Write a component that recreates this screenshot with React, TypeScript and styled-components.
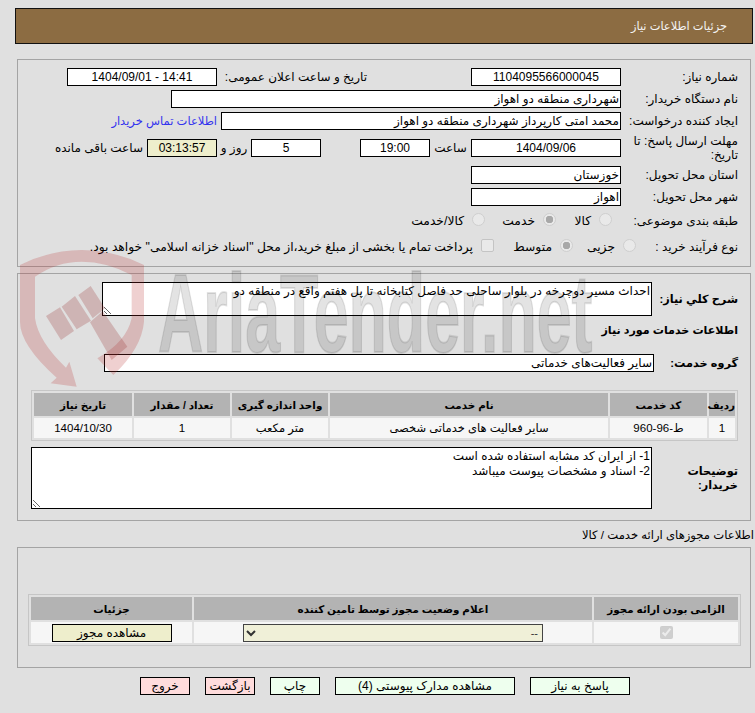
import React from 'react';
import styled, { createGlobalStyle } from 'styled-components';

const GlobalStyle = createGlobalStyle`
  html, body {
    margin: 0;
    padding: 0;
    background: #e0e0e0;
  }
  body {
    direction: rtl;
    color: #000;
    font-family: "Liberation Sans", "DejaVu Sans", sans-serif;
    font-size: 12px;
  }
`;

const Page = styled.div`
  position: relative;
  height: 713px;
  overflow: hidden;
  padding: 8px 4px 0 17px;
  box-sizing: border-box;
`;

const Header = styled.header`
  display: flex;
  align-items: center;
  height: 36px;
  margin: 0 -2px 15px;
  padding-right: 25px;
  box-sizing: border-box;
  background: #8c6c42;
  border: 1px solid #111;
  color: #f4f4f4;
  font-size: 11.4px;
`;

const Panel = styled.section<{ $pad: string; $gap?: number }>`
  display: flex;
  flex-direction: column;
  gap: ${(p) => p.$gap ?? 4}px;
  padding: ${(p) => p.$pad};
  border: 1px solid #a4a4a4;
  box-sizing: border-box;
`;

const Row = styled.div<{ $h?: number; $mt?: number }>`
  display: flex;
  align-items: center;
  height: ${(p) => p.$h ?? 18}px;
  margin-top: ${(p) => p.$mt ?? 0}px;
  flex: none;
`;

const Label = styled.label<{ $w?: number; $gap?: number; $center?: boolean }>`
  flex: none;
  width: ${(p) => p.$w ?? 117}px;
  margin-right: ${(p) => p.$gap ?? 0}px;
  font-size: 12px;
  line-height: 14px;
  text-align: ${(p) => (p.$center ? 'center' : 'start')};
  white-space: ${(p) => (p.$center ? 'nowrap' : 'normal')};
`;

const BoldLabel = styled(Label)`
  font-size: 11.3px;
  font-weight: bold;
  white-space: nowrap;
`;

const Field = styled.div<{ $w: number; $gap?: number; $center?: boolean; $bg?: string }>`
  flex: none;
  width: ${(p) => p.$w}px;
  height: 18px;
  margin-right: ${(p) => p.$gap ?? 0}px;
  padding: 0 1px;
  box-sizing: border-box;
  background: ${(p) => p.$bg ?? '#fff'};
  border: 1px solid #000;
  font-size: 12px;
  line-height: 16px;
  text-align: ${(p) => (p.$center ? 'center' : 'start')};
  white-space: nowrap;
  overflow: hidden;
`;

const ContactLink = styled.a`
  margin-right: 4px;
  color: #3333ee;
  font-size: 11.5px;
  white-space: nowrap;
`;

const Option = styled.span<{ $w?: number }>`
  display: inline-flex;
  align-items: center;
  gap: 8px;
  flex: none;
  width: ${(p) => (p.$w ? `${p.$w}px` : 'auto')};
  font-size: 12.3px;
  white-space: nowrap;
`;

const Radio = styled.input.attrs({ type: 'radio', disabled: true })`
  appearance: none;
  flex: none;
  width: 13px;
  height: 13px;
  margin: 0 0 3px;
  border: 1px solid #cfcfcf;
  border-radius: 50%;
  background: #e9e9e9;

  &:checked {
    background: radial-gradient(circle, #a8a8a8 0 3.5px, #e9e9e9 4px);
  }
`;

const EmptyCheck = styled.input.attrs({ type: 'checkbox', disabled: true })`
  appearance: none;
  flex: none;
  width: 13px;
  height: 13px;
  margin: 0 0 3px;
  border: 1px solid #c4c4c4;
  border-radius: 2px;
  background: #e9e9e9;
`;

const TextBox = styled.textarea<{ $w: number; $h: number }>`
  display: block;
  flex: none;
  width: ${(p) => p.$w}px;
  height: ${(p) => p.$h}px;
  margin: 0;
  padding: 1px;
  box-sizing: border-box;
  border: 1px solid #000;
  border-radius: 0;
  outline: none;
  background: #fff;
  font-family: inherit;
  font-size: 12px;
  line-height: 15px;
  direction: rtl;
`;

const Heading = styled.div`
  font-size: 11.1px;
  font-weight: bold;
`;

const Grid = styled.table<{ $w: number }>`
  flex: none;
  width: ${(p) => p.$w}px;
  table-layout: fixed;
  border: 1px solid #c6c6c6;
  border-spacing: 2px;
  border-collapse: separate;
`;

const Th = styled.th`
  height: 23px;
  padding: 0;
  background: #b3b3b3;
  font-size: 10.4px;
  font-weight: bold;
  text-align: center;
`;

const Td = styled.td<{ $h?: number }>`
  height: ${(p) => p.$h ?? 20}px;
  padding: 0;
  background: #f6f6f6;
  font-size: 11.5px;
  text-align: center;
`;

const SectionTitle = styled.div`
  height: 26px;
  margin-right: -3px;
  font-size: 11.6px;
  line-height: 28px;
`;

const LicenseButton = styled.button`
  display: block;
  width: 120px;
  height: 18px;
  margin: 0 auto;
  padding: 0;
  background: #eeeecc;
  border: 1px solid #000;
  font-family: inherit;
  font-size: 12px;
  color: #000;
`;

const StatusSelect = styled.select`
  display: block;
  width: 300px;
  height: 18px;
  margin: 0 auto;
  padding: 0;
  background-color: #f0f0d8;
  border: 1px solid #444;
  border-radius: 0;
  font-family: inherit;
  font-size: 11px;
  color: #333;
`;

const Required = styled.input.attrs({ type: 'checkbox', disabled: true, defaultChecked: true })`
  display: block;
  width: 13px;
  height: 13px;
  margin: 0 auto;
`;

const Footer = styled.footer`
  display: flex;
  justify-content: center;
  gap: 15px;
  margin-top: 9px;
  padding-left: 2px;
`;

const ActionButton = styled.button<{ $w: number; $danger?: boolean }>`
  width: ${(p) => p.$w}px;
  height: 18px;
  padding: 0;
  background: ${(p) => (p.$danger ? '#ffdcdc' : '#eeffee')};
  border: 1px solid #000;
  font-family: inherit;
  font-size: 12px;
  color: #000;
  white-space: nowrap;
  overflow: hidden;
`;

const Watermark = styled.div`
  position: absolute;
  top: 0;
  left: 0;
  width: 755px;
  height: 713px;
  pointer-events: none;
`;

const Shield = styled.svg`
  position: absolute;
  top: 245px;
  left: 10px;
`;

const WatermarkText = styled.div`
  position: absolute;
  top: 268px;
  left: 158px;
  direction: ltr;
  color: rgba(0, 0, 0, 0.11);
  font-family: "Liberation Sans", sans-serif;
  font-size: 112px;
  font-weight: bold;
  line-height: 92px;
  white-space: nowrap;
  -webkit-text-stroke: 2px rgba(0, 0, 0, 0.11);
  transform: scaleX(0.56);
  transform-origin: left top;
`;

const services = [
  { row: '1', code: 'ط-96-960', name: 'سایر فعالیت های خدماتی شخصی', unit: 'متر مکعب', qty: '1', date: '1404/10/30' },
];

const App = () => {
  return (
    <Page>
      <GlobalStyle />
      <Header>جزئیات اطلاعات نیاز</Header>

      <Panel $pad="8px 12px 8px 0">
        <Row>
          <Label>شماره نیاز:</Label>
          <Field $w={150} $center>1104095566000045</Field>
          <Label $w={150} $gap={104}>تاریخ و ساعت اعلان عمومی:</Label>
          <Field $w={150} $center>14:41 - 1404/09/01</Field>
        </Row>
        <Row>
          <Label>نام دستگاه خریدار:</Label>
          <Field $w={450}>شهرداری منطقه دو اهواز</Field>
        </Row>
        <Row>
          <Label>ایجاد کننده درخواست:</Label>
          <Field $w={400}>محمد امتی کارپرداز شهرداری منطقه دو اهواز</Field>
          <ContactLink>اطلاعات تماس خریدار</ContactLink>
        </Row>
        <Row $h={28}>
          <Label>مهلت ارسال پاسخ: تا تاریخ:</Label>
          <Field $w={150} $center>1404/09/06</Field>
          <Label $w={41} $center>ساعت</Label>
          <Field $w={70} $center>19:00</Field>
          <Field $w={70} $gap={39} $center>5</Field>
          <Label $w={34} $center>روز و</Label>
          <Field $w={70} $center $bg="#eeeecc">03:13:57</Field>
          <Label $w={96} $gap={4}>ساعت باقی مانده</Label>
        </Row>
        <Row>
          <Label>استان محل تحویل:</Label>
          <Field $w={150}>خوزستان</Field>
        </Row>
        <Row>
          <Label>شهر محل تحویل:</Label>
          <Field $w={150}>اهواز</Field>
        </Row>
        <Row $h={22}>
          <Label>طبقه بندی موضوعی:</Label>
          <Option $w={9} />
          <Option $w={56}><Radio name="kind" />کالا</Option>
          <Option $w={71}><Radio name="kind" defaultChecked />خدمت</Option>
          <Option><Radio name="kind" />کالا/خدمت</Option>
        </Row>
        <Row $h={22}>
          <Label $w={102}>نوع فرآیند خرید :</Label>
          <Option $w={63}><Radio name="process" />جزیی</Option>
          <Option $w={79}><Radio name="process" defaultChecked />متوسط</Option>
          <Option><EmptyCheck />پرداخت تمام یا بخشی از مبلغ خرید،از محل "اسناد خزانه اسلامی" خواهد بود.</Option>
        </Row>
      </Panel>

      <Panel $pad="8px 12px 11px 0" $gap={0} style={{ marginTop: 6 }}>
        <Row $h={34}>
          <BoldLabel $w={86}>شرح کلي نیاز:</BoldLabel>
          <TextBox $w={550} $h={34} readOnly defaultValue="احداث مسیر دوچرخه در بلوار ساحلی حد فاصل کتابخانه تا پل هفتم واقع در منطقه دو" />
        </Row>
        <Row $h={28}>
          <Heading>اطلاعات خدمات مورد نیاز</Heading>
        </Row>
        <Row $mt={10}>
          <BoldLabel $w={84}>گروه خدمت:</BoldLabel>
          <Field $w={550}>سایر فعالیت‌های خدماتی</Field>
        </Row>
        <Grid $w={707} style={{ marginTop: 18 }}>
          <colgroup>
            <col style={{ width: 26 }} />
            <col style={{ width: 97 }} />
            <col style={{ width: 278 }} />
            <col style={{ width: 96 }} />
            <col style={{ width: 96 }} />
            <col style={{ width: 98 }} />
          </colgroup>
          <thead>
            <tr>
              <Th>ردیف</Th>
              <Th>کد خدمت</Th>
              <Th>نام خدمت</Th>
              <Th>واحد اندازه گیری</Th>
              <Th>تعداد / مقدار</Th>
              <Th>تاریخ نیاز</Th>
            </tr>
          </thead>
          <tbody>
            {services.map((item) => (
              <tr key={item.row}>
                <Td>{item.row}</Td>
                <Td>{item.code}</Td>
                <Td>{item.name}</Td>
                <Td>{item.unit}</Td>
                <Td>{item.qty}</Td>
                <Td>{item.date}</Td>
              </tr>
            ))}
          </tbody>
        </Grid>
        <Row $h={62} $mt={6}>
          <BoldLabel $w={86}>توضیحات<br />خریدار:</BoldLabel>
          <TextBox
            $w={621}
            $h={62}
            readOnly
            defaultValue={'1- از ایران کد مشابه استفاده شده است\n2- اسناد و مشخصات پیوست میباشد'}
          />
        </Row>
      </Panel>

      <SectionTitle>اطلاعات مجوزهای ارائه خدمت / کالا</SectionTitle>

      <Panel $pad="46px 9px 21px 0">
        <Grid $w={713}>
          <colgroup>
            <col style={{ width: 144 }} />
            <col style={{ width: 398 }} />
            <col style={{ width: 161 }} />
          </colgroup>
          <thead>
            <tr>
              <Th>الزامی بودن ارائه مجوز</Th>
              <Th>اعلام وضعیت مجوز توسط تامین کننده</Th>
              <Th>جزئیات</Th>
            </tr>
          </thead>
          <tbody>
            <tr>
              <Td $h={21}><Required /></Td>
              <Td $h={21}>
                <StatusSelect defaultValue="none">
                  <option value="none">--</option>
                </StatusSelect>
              </Td>
              <Td $h={21}><LicenseButton>مشاهده مجوز</LicenseButton></Td>
            </tr>
          </tbody>
        </Grid>
      </Panel>

      <Footer>
        <ActionButton $w={100}>پاسخ به نیاز</ActionButton>
        <ActionButton $w={180}>مشاهده مدارک پیوستی (4)</ActionButton>
        <ActionButton $w={50}>چاپ</ActionButton>
        <ActionButton $w={50} $danger>بازگشت</ActionButton>
        <ActionButton $w={50} $danger>خروج</ActionButton>
      </Footer>

      <Watermark>
        <Shield width="170" height="150" viewBox="0 0 510 450">
          <path
            fill="rgba(180, 40, 40, 0.22)"
            d="M30 60 Q120 15 215 15 Q310 15 402 60 L402 230 Q395 310 310 390 L262 340 Q350 290 365 220 L365 90 Q290 50 215 50 Q140 50 75 95 L75 220 Q85 290 168 368 L178 350 L200 425 L122 415 L140 398 Q30 300 30 230 Z"
          />
          <path
            fill="rgba(150, 40, 40, 0.24)"
            d="M108 213 L150 187 L192 258 L153 285 Z M155 185 L195 153 L243 227 L200 253 Z M205 150 L242 123 L285 190 L248 220 Z M240 232 L278 198 L352 305 L305 345 Z"
          />
        </Shield>
        <WatermarkText>AriaTender.net</WatermarkText>
      </Watermark>
    </Page>
  );
};

export default App;
